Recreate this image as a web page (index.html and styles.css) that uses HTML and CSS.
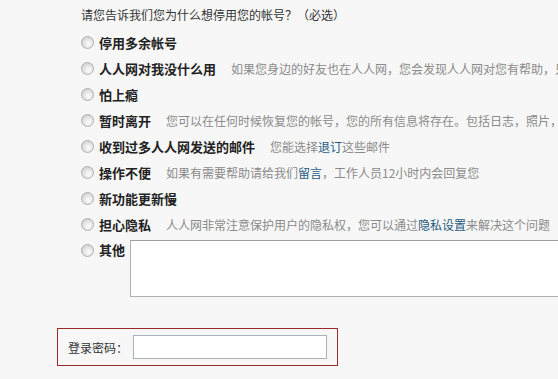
FILE: index.html
```html
<!DOCTYPE html>
<html>

<head lang="zh-CN">
	<meta charset="UTF-8">
	<title>停用帐号</title>
	<link rel="stylesheet" href="styles.css">
</head>

<body>
	<div class="reason-page">
		<p class="reason-title">请您告诉我们您为什么想停用您的帐号？（必选）</p>
		<ul class="reason-list">
			<li class="reason">
				<input type="radio" name="reason" class="radio">
				<span class="label">停用多余帐号</span>
			</li>
			<li class="reason">
				<input type="radio" name="reason" class="radio">
				<span class="label">人人网对我没什么用</span>
				<span class="desc">如果您身边的好友也在人人网，您会发现人人网对您有帮助，只要您多加几个好友</span>
			</li>
			<li class="reason">
				<input type="radio" name="reason" class="radio">
				<span class="label">怕上瘾</span>
			</li>
			<li class="reason">
				<input type="radio" name="reason" class="radio">
				<span class="label">暂时离开</span>
				<span class="desc">您可以在任何时候恢复您的帐号，您的所有信息将存在。包括日志，照片，好友等</span>
			</li>
			<li class="reason">
				<input type="radio" name="reason" class="radio">
				<span class="label">收到过多人人网发送的邮件</span>
				<span class="desc">您能选择<a href="#">退订</a>这些邮件</span>
			</li>
			<li class="reason">
				<input type="radio" name="reason" class="radio">
				<span class="label">操作不便</span>
				<span class="desc">如果有需要帮助请给我们<a href="#">留言</a>，工作人员12小时内会回复您</span>
			</li>
			<li class="reason">
				<input type="radio" name="reason" class="radio">
				<span class="label">新功能更新慢</span>
			</li>
			<li class="reason">
				<input type="radio" name="reason" class="radio">
				<span class="label">担心隐私</span>
				<span class="desc">人人网非常注意保护用户的隐私权，您可以通过<a href="#">隐私设置</a>来解决这个问题</span>
			</li>
			<li class="reason reason-other">
				<input type="radio" name="reason" class="radio">
				<span class="label">其他</span>
				<textarea class="other-text"></textarea>
			</li>
		</ul>
		<div class="password-box">
			<label class="password-label">登录密码：</label>
			<input type="password" class="password-input">
		</div>
	</div>
</body>

</html>
```

FILE: styles.css
```css
* {
	margin: 0;
	padding: 0;
}

body {
	background: #f7f7f7;
	overflow: hidden;
	font-family: "Noto Sans CJK SC", sans-serif;
	font-size: 12px;
	color: #333;
}

.reason-page {
	padding-top: 5px;
}

.reason-title {
	margin-left: 81px;
	line-height: 20px;
	height: 24px;
	white-space: nowrap;
}

.reason-list {
	margin-left: 81px;
	list-style: none;
}

.reason {
	display: flex;
	align-items: center;
	height: 26px;
	white-space: nowrap;
}

.radio {
	appearance: none;
	-webkit-appearance: none;
	width: 13px;
	height: 13px;
	border-radius: 50%;
	border: 1px solid #b0b0b0;
	background: radial-gradient(circle at 60% 65%, #fff 0, #e8e8e8 40%, #c4c4c4 100%);
	margin-right: 5px;
	flex: none;
}

.label {
	font-size: 13px;
	font-weight: bold;
	color: #222;
}

.desc {
	margin-left: 15px;
	color: #8a8a8a;
}

.desc a {
	color: #1f5a7d;
	text-decoration: none;
}

.reason-other {
	align-items: flex-start;
	height: auto;
}

.reason-other .radio {
	margin-top: 7px;
}

.reason-other .label {
	line-height: 26px;
}

.other-text {
	width: 460px;
	height: 55px;
	margin: 3px 0 0 5px;
	border: 1px solid #b0b0b0;
	border-top-color: #a0a0a0;
	background: #fff;
	resize: none;
	flex: none;
}

.password-box {
	display: flex;
	align-items: center;
	width: 264px;
	margin: 31px 0 0 57px;
	padding: 6px 5px 6px 10px;
	border: 1px solid #9a2a2a;
}

.password-label {
	width: 65px;
	flex: none;
	white-space: nowrap;
}

.password-input {
	width: 194px;
	height: 24px;
	box-sizing: border-box;
	border: 1px solid #a8b0b8;
	background: #fff;
}
```
